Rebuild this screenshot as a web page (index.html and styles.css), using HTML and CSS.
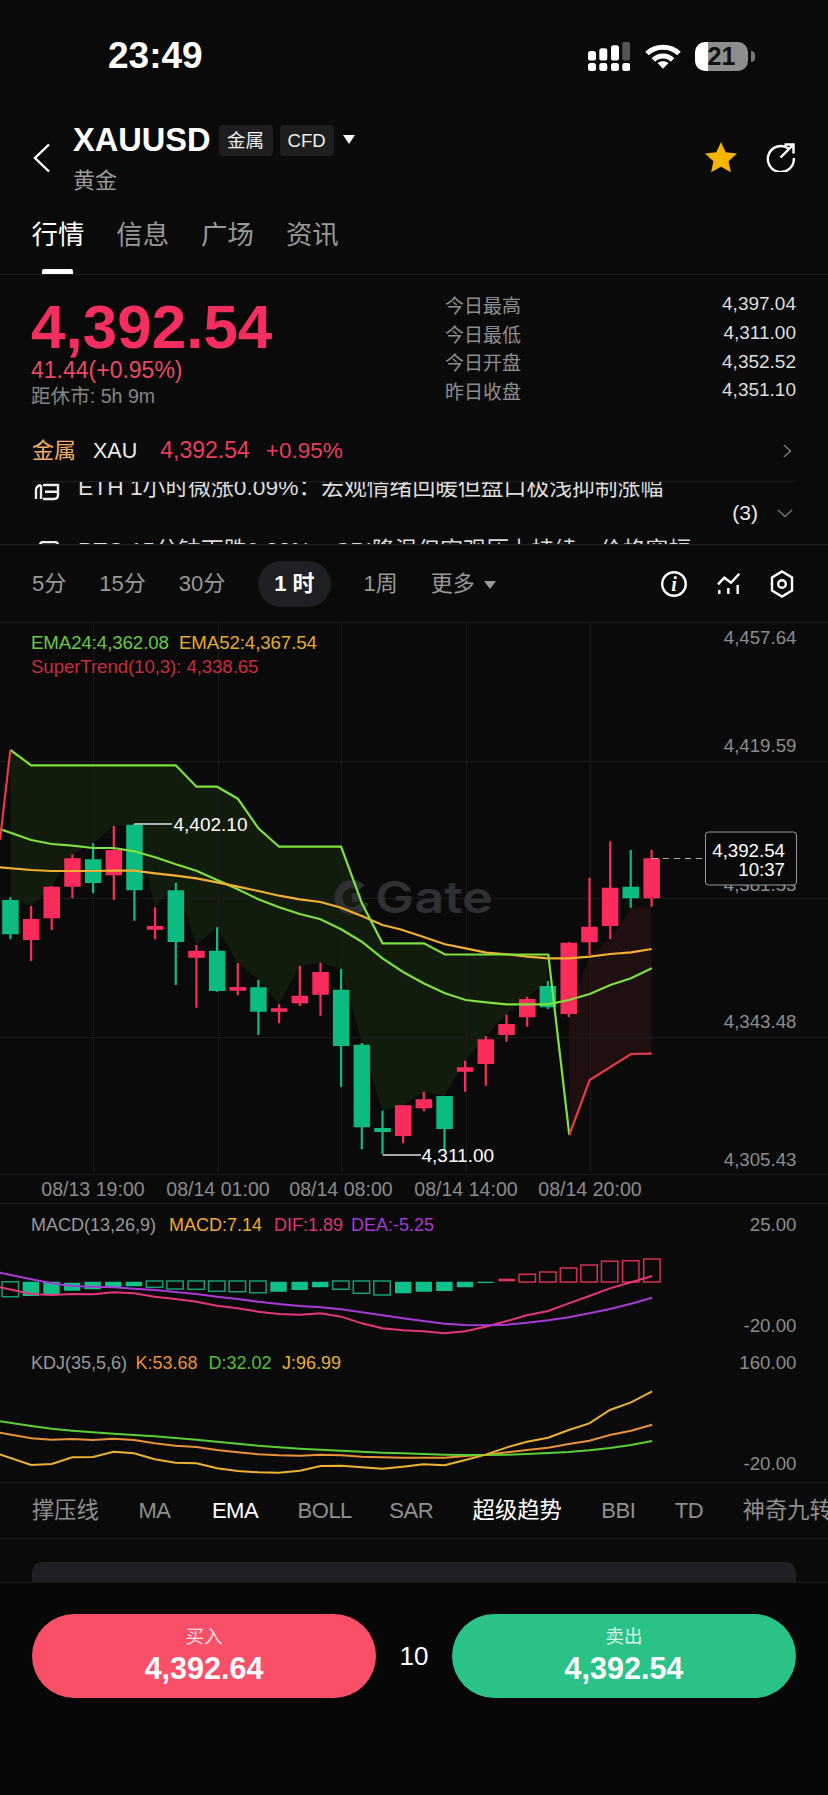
FILE: index.html
```html
<!DOCTYPE html>
<html lang="zh-CN">
<head>
<meta charset="utf-8">
<title>XAUUSD</title>
<link rel="stylesheet" href="styles.css">
</head>
<body>
<main class="app">
  <header class="status">
    <span class="clock">23:49</span>
    <div class="status-icons">
      <svg class="signal" viewBox="0 0 42 29" width="42" height="29">
        <path class="sig-on" d="M2.500 21h3a2.500 2.500 0 0 1 2.500 2.500v3a2.500 2.500 0 0 1-2.500 2.500h-3a2.500 2.500 0 0 1-2.500-2.500v-3a2.500 2.500 0 0 1 2.500-2.500zM13.800 21h3a2.500 2.500 0 0 1 2.500 2.500v3a2.500 2.500 0 0 1-2.500 2.500h-3a2.500 2.500 0 0 1-2.500-2.500v-3a2.500 2.500 0 0 1 2.500-2.500zM25.500 21h3a2.500 2.500 0 0 1 2.500 2.500v3a2.500 2.500 0 0 1-2.500 2.500h-3a2.500 2.500 0 0 1-2.500-2.500v-3a2.500 2.500 0 0 1 2.500-2.500zM36.800 21h3a2.500 2.500 0 0 1 2.500 2.500v3a2.500 2.500 0 0 1-2.500 2.500h-3a2.500 2.500 0 0 1-2.500-2.500v-3a2.500 2.500 0 0 1 2.500-2.500z"/>
        <path class="sig-on" d="M2.500 9h3a2.500 2.500 0 0 1 2.500 2.500v5a2 2 0 0 1-2 2h-4a2 2 0 0 1-2-2v-5a2.500 2.500 0 0 1 2.500-2.500zM13.800 6.300h3a2.500 2.500 0 0 1 2.500 2.500v7.700a2 2 0 0 1-2 2h-4a2 2 0 0 1-2-2v-7.700a2.500 2.500 0 0 1 2.500-2.500zM25.500 3.300h3a2.500 2.500 0 0 1 2.500 2.500v10.700a2 2 0 0 1-2 2h-4a2 2 0 0 1-2-2v-10.700a2.500 2.500 0 0 1 2.500-2.500z"/>
        <path class="sig-off" d="M36.300 0h4a1.800 1.800 0 0 1 1.700 1.800v14.700a2 2 0 0 1-2 2h-3.700a2 2 0 0 1-2-2v-14.700a1.800 1.800 0 0 1 2-1.800z"/>
      </svg>
      <svg class="wifi" viewBox="0 0 38 28" width="38" height="28">
        <path class="wifi-arc" d="M3 11.500C11.500 3 26.500 3 35 11.500"/>
        <path class="wifi-arc" d="M9.500 18C14.500 12.500 23.500 12.500 28.500 18"/>
        <path class="wifi-dot" d="M13.500 21C16.500 18.800 21.500 18.800 24.500 21L19 26.800z"/>
      </svg>
      <div class="battery"><span>21</span></div>
    </div>
  </header>

  <section class="title-bar">
    <svg class="back" viewBox="0 0 18 30" width="18" height="30"><path class="ico-line" d="M16 1.500L2 15l14 13.500"/></svg>
    <div class="title-main">
      <div class="title-row">
        <h1 class="symbol">XAUUSD</h1>
        <span class="tag">金属</span>
        <span class="tag tag-cfd">CFD</span>
        <span class="caret"></span>
      </div>
      <div class="subname">黄金</div>
    </div>
    <div class="title-actions">
      <svg viewBox="0 0 34 32" width="34" height="32"><path class="star" d="M17 1l4.700 10.300 11.300 1.300-8.400 7.600 2.300 11.100L17 25.700 7.100 31.300l2.300-11.100L1 12.600l11.300-1.300z"/></svg>
      <svg viewBox="0 0 30 30" width="30" height="30"><path class="ico-line" d="M22.500 6.500A13 13 0 1 0 27.800 16M14.500 15.500L27.500 2.500M18.500 2.500h9v9"/></svg>
    </div>
  </section>

  <nav class="tabs">
    <a class="tab tab-on">行情</a>
    <a class="tab">信息</a>
    <a class="tab">广场</a>
    <a class="tab">资讯</a>
  </nav>

  <section class="quote">
    <div class="quote-left">
      <div class="last">4,392.54</div>
      <div class="change">41.44(+0.95%)</div>
      <div class="close-in">距休市: 5h 9m</div>
    </div>
    <dl class="stats">
      <div class="stat"><dt>今日最高</dt><dd>4,397.04</dd></div>
      <div class="stat"><dt>今日最低</dt><dd>4,311.00</dd></div>
      <div class="stat"><dt>今日开盘</dt><dd>4,352.52</dd></div>
      <div class="stat"><dt>昨日收盘</dt><dd>4,351.10</dd></div>
    </dl>
  </section>

  <section class="category">
    <span class="cat-name">金属</span>
    <span class="cat-code">XAU</span>
    <span class="cat-price">4,392.54</span>
    <span class="cat-pct">+0.95%</span>
    <svg class="cat-arrow" viewBox="0 0 9 14" width="9" height="14"><path class="ico-dim" d="M1 1l6.500 6L1 13"/></svg>
  </section>

  <section class="news">
    <div class="news-list">
      <div class="news-item">
        <svg viewBox="0 0 26 24" width="26" height="24"><path class="ico-news" d="M7 7Q2 8 2 12V21M7 7V21M9 7H24V17Q24 21 20 21H9M11 13.700H23"/></svg>
        <span>ETH 1小时微涨0.09%：宏观情绪回暖但盘口极浅抑制涨幅</span>
      </div>
      <div class="news-item">
        <svg viewBox="0 0 26 24" width="26" height="24"><rect class="ico-news" x="6" y="1" width="18" height="20" rx="3"/></svg>
        <span>BTC 15分钟下跌0.38%，CPI降温但宏观压力持续，价格窄幅</span>
      </div>
    </div>
    <div class="news-count">
      <span>(3)</span>
      <svg viewBox="0 0 16 9" width="16" height="9"><path class="ico-dim" d="M1 1l7 6.500L15 1"/></svg>
    </div>
  </section>

  <section class="periods">
    <span class="period">5分</span>
    <span class="period">15分</span>
    <span class="period">30分</span>
    <span class="period period-on">1 时</span>
    <span class="period">1周</span>
    <span class="period">更多<i class="caret caret-small"></i></span>
    <div class="period-tools">
      <svg viewBox="0 0 26 26" width="26" height="26"><circle class="ico-thin" cx="13" cy="13" r="11.800"/><text class="info-i" x="13" y="19.500">i</text></svg>
      <svg viewBox="0 0 24 24" width="24" height="24"><path class="ico-thin" d="M1 12.300L7.300 5.700L14 10.700L22.300 1.700M2.300 18V22M11.300 16V22M20.700 13V22"/></svg>
      <svg viewBox="0 0 24 28" width="24" height="28"><path class="ico-thin" d="M12 1.500L22 7.500v13L12 26.500 2 20.500v-13z"/><circle class="ico-thin" cx="12" cy="14" r="3.800"/></svg>
    </div>
  </section>

  <section class="chart">
    <svg viewBox="0 623 828 580" width="828" height="580">
      <path class="fill-up" d="M10.400 750L31.100 765.300H175.800L196.400 786.700H217.100L237.800 798.700L258.400 828.300L279.100 846.700H341.100L361.800 903L382.500 943.300H424L444.500 954.300H547.800V981L527.200 996.700L506.500 1014.700L485.800 1036L465.100 1060.700L444.500 1096L423.800 1091.700L403.100 1105L382.500 1110.700L361.800 1043L341.100 969L320.500 962.700L299.800 965.700L279.100 1004.300L258.400 980L237.800 963.300L217.100 927.300L196.400 945L175.800 882.700L155.100 907.300L134.400 824L113.800 826L93.100 843.300L72.400 854.300L51.700 886L31.100 906L10.400 897.300z"/>
      <path class="fill-down" d="M569 1017L589.700 955L610.300 939L631 907.700L651.700 906.700V1053.700L631 1054L589.700 1080L569.300 1135z"/>
      <path class="grid" d="M0 761.500H828M0 898.500H828M0 1037.500H828M0 1174.500H828M93.500 623V1174M218.500 623V1174M341.500 623V1174M466.500 623V1174M590.500 623V1174"/>
      <path class="wm-logo" d="M361.500 888A13.500 13.500 0 1 0 364.700 902"/>
      <rect class="wm-square" x="352" y="893" width="9" height="9"/>
      <text class="watermark" x="375" y="913" textLength="118" lengthAdjust="spacingAndGlyphs">Gate</text>

      <path class="wick-up" d="M10.400 897.300V939.300M93.100 843.300V893.300M134.400 824V920.700M175.800 882.700V985M217.100 927.300V991.700M258.400 980V1035M341.100 969V1087M361.800 1043V1149.300M382.500 1110.700V1154M444.500 1096V1151M547.800 981V1009M630.700 850V907.700"/>
      <path class="wick-down" d="M31.100 906V961M51.700 886V930M72.400 854.300V898.300M113.800 826V900M155.100 907.300V939.300M196.400 945V1007.700M237.800 963.300V995.300M279.100 1004.300V1023.300M299.800 965.700V1006M320.500 962.700V1015.700M403.100 1105V1143.300M423.800 1091.700V1111.300M465.100 1060.700V1091.700M485.800 1036V1085.700M506.500 1014.700V1041.700M527.200 996.700V1026.700M568.800 942V1017M589.500 877.700V955M610.200 841.300V939M651.600 850V906.700"/>
      <path class="body-up" d="M2.200 900h16.500V934.300h-16.500zM84.900 859.300h16.500V883h-16.500zM126.200 824.700h16.500V890.300h-16.500zM167.600 890.300h16.500V942h-16.500zM208.900 950.700h16.500V991h-16.500zM250.200 987.300h16.500V1011.700h-16.500zM332.900 989.700h16.500V1046h-16.500zM353.600 1044.700h16.500V1127.300h-16.500zM374.300 1128h16.500V1132h-16.500zM436.300 1096h16.500V1129h-16.500zM539.600 986h16.500V1007.300h-16.500zM622.500 886.700h16.500V898.300h-16.500z"/>
      <path class="body-down" d="M22.900 919h16.500V940h-16.500zM43.500 886.700h16.500V918.300h-16.500zM64.200 858.300h16.500V886.700h-16.500zM105.600 850h16.500V875.300h-16.500zM146.900 926h16.500V929.700h-16.500zM188.200 950.700h16.500V957.700h-16.500zM229.600 987h16.500V990.700h-16.500zM270.900 1008.300h16.500V1011.700h-16.500zM291.600 995.700h16.500V1003.300h-16.500zM312.300 972h16.500V994.700h-16.500zM394.900 1105.300h16.500V1136h-16.500zM415.600 1099.300h16.500V1108.300h-16.500zM456.900 1067.300h16.500V1071.700h-16.500zM477.600 1039.300h16.500V1064h-16.500zM498.300 1024h16.500V1035h-16.500zM519 999h16.500V1017.300h-16.500zM560.500 942.700h16.500V1014h-16.500zM581.200 926.700h16.500V942.300h-16.500zM601.900 887.700h16.500V926h-16.500zM643.400 858.300h16.500V898.300h-16.500z"/>

      <path class="line-ema24" d="M0 829L31.100 840L51.700 844L72.400 845.700L93.100 848L113.800 848L134.400 851.300L155.100 857.300L175.800 864.300L196.400 870.700L217.100 880L237.800 889.300L258.400 899.300L279.100 907.300L299.800 914L320.500 919.300L341.100 929.300L361.800 941.700L382.500 958.300L403.100 972L424 983.500L445 993.300L465.700 1000L486.300 1002.300L507 1004.300L527.700 1004.300L548.300 1004.300L569 1000L589.700 994L610.300 985L631 978.300L651.700 968.300"/>
      <path class="line-ema52" d="M0 867.300L31.100 870L51.700 871L72.400 871L93.100 871L113.800 870.700L134.400 870.700L155.100 873.300L175.800 875.700L196.400 878.300L217.100 882.300L237.800 886.700L258.400 891L279.100 895.700L299.800 899.300L320.500 902L341.100 907.700L361.800 916L382.500 925L400 929.300L420.700 936L445 944.300L465.700 948.300L486.300 952.700L507 954.300L527.700 956.700L548.300 958.300L569 958.300L589.700 956.700L610.300 954L631 952.300L651.700 949"/>
      <path class="line-st-up" d="M10.400 750L31.100 765.300H175.800L196.400 786.700H217.100L237.800 798.700L258.400 828.300L279.100 846.700H341.100L361.800 903L382.500 943.300H424L445 954.500H548.300L569.300 1135"/>
      <path class="line-st-down" d="M0 840L10.400 750M569.300 1135L589.700 1080L631 1054L651.700 1053.700"/>

      <text class="leg leg-ema24" x="31" y="648.500">EMA24:4,362.08</text>
      <text class="leg leg-ema52" x="179" y="648.500">EMA52:4,367.54</text>
      <text class="leg leg-st" x="31" y="672.500">SuperTrend(10,3): 4,338.65</text>

      <text class="ax" x="796.500" y="644">4,457.64</text>
      <text class="ax" x="796.500" y="752">4,419.59</text>
      <text class="ax" x="796.500" y="891">4,381.53</text>
      <text class="ax" x="796.500" y="1027.500">4,343.48</text>
      <text class="ax" x="796.500" y="1166">4,305.43</text>

      <path class="hi-lo" d="M134.400 824H172M382.500 1155H421"/>
      <text class="mark" x="173.500" y="831">4,402.10</text>
      <text class="mark" x="421.500" y="1162">4,311.00</text>

      <path class="last-dash" d="M652 858.500H705"/>
      <rect class="last-box" x="705.500" y="832" width="91" height="53" rx="3"/>
      <text class="box-text" x="785" y="856.500">4,392.54</text>
      <text class="box-text" x="785" y="875.500">10:37</text>

      <text class="t" x="93" y="1195.500">08/13 19:00</text>
      <text class="t" x="218" y="1195.500">08/14 01:00</text>
      <text class="t" x="341" y="1195.500">08/14 08:00</text>
      <text class="t" x="466" y="1195.500">08/14 14:00</text>
      <text class="t" x="590" y="1195.500">08/14 20:00</text>
    </svg>
  </section>

  <section class="subcharts">
    <svg viewBox="0 1203 828 279" width="828" height="279">
      <path class="grid" d="M0 1203.500H828"/>
      <g transform="translate(0 1190) scale(.52806 .33333)">
        <path class="hist-up" d="M43 275h31v43h-31zM82 275h31v37h-31zM121 278h31v24h-31zM160 275h31v23h-31zM199 275h31v17h-31zM238 275h31v14h-31zM512 275h31v30h-31zM552 275h31v25h-31zM591 275h31v17h-31zM748 275h31v35h-31zM787 275h31v30h-31zM826 275h31v28h-31zM865 275h31v17h-31zM904 275h31v4h-31z"/>
        <path class="hist-up-o" d="M4 275h31v45h-31zM277 273h31v19h-31zM316 273h31v24h-31zM356 273h31v25h-31zM395 273h31v31h-31zM434 273h31v32h-31zM473 273h31v35h-31zM630 273h31v25h-31zM669 273h31v37h-31zM708 273h31v42h-31z"/>
        <path class="hist-down" d="M944 266h31v8h-31z"/>
        <path class="hist-down-o" d="M983 253h31v23h-31zM1022 246h31v30h-31zM1061 234h31v42h-31zM1100 225h31v51h-31zM1139 214h31v62h-31zM1179 212h31v64h-31zM1219 207h31v69h-31z"/>
        <path class="ln ln-dif" d="M0 292L59 312L98 315L137 312L176 313L215 307L254 310L293 320L332 327L372 335L411 347L450 355L489 365L528 372L568 374L607 370L646 380L685 400L724 415L763 421L802 424L842 430L881 424L920 410L960 393L998 376L1038 363L1077 340L1116 318L1155 295L1195 277L1235 258"/>
        <path class="ln ln-dea" d="M0 248L59 268L98 280L137 288L176 290L215 292L254 296L293 300L332 306L372 312L411 320L450 327L489 335L528 342L568 348L607 352L646 358L685 367L724 376L763 385L802 393L842 401L881 405L920 406L960 404L998 398L1038 391L1077 382L1116 370L1155 357L1195 341L1235 323"/>
        <path class="ln ln-k" d="M0 728L59 745L98 749L137 747L176 750L215 746L254 750L293 760L332 767L372 771L411 780L450 787L489 793L528 796L568 797L607 794L646 796L685 800L724 802L763 803L802 803L842 803L881 798L920 794L960 787L998 780L1038 773L1077 762L1116 752L1155 735L1195 722L1235 704"/>
        <path class="ln ln-d" d="M0 694L59 708L98 716L137 722L176 727L215 731L254 735L293 739L332 744L372 749L411 755L450 761L489 767L528 772L568 776L607 779L646 782L685 785L724 788L763 790L802 792L842 794L881 795L920 795L960 794L998 792L1038 789L1077 786L1116 781L1155 774L1195 765L1235 753"/>
        <path class="ln ln-j" d="M0 793L59 825L98 822L137 802L176 801L215 785L254 790L293 808L332 818L372 820L411 835L450 843L489 847L528 848L568 842L607 828L646 827L685 832L724 836L763 830L802 823L842 826L881 810L920 794L960 772L998 755L1038 743L1077 720L1116 700L1155 660L1195 637L1235 604"/>
      </g>
      <text class="sub-leg c-gray" x="31" y="1231">MACD(13,26,9)</text>
      <text class="sub-leg c-macd" x="169" y="1231">MACD:7.14</text>
      <text class="sub-leg c-dif" x="274" y="1231">DIF:1.89</text>
      <text class="sub-leg c-dea" x="351" y="1231">DEA:-5.25</text>
      <text class="ax" x="796.500" y="1230.500">25.00</text>
      <text class="ax" x="796.500" y="1332">-20.00</text>
      <text class="sub-leg c-gray" x="31" y="1369">KDJ(35,5,6)</text>
      <text class="sub-leg c-k" x="135.500" y="1369">K:53.68</text>
      <text class="sub-leg c-d" x="208.500" y="1369">D:32.02</text>
      <text class="sub-leg c-j" x="282" y="1369">J:96.99</text>
      <text class="ax" x="796.500" y="1368.500">160.00</text>
      <text class="ax" x="796.500" y="1470">-20.00</text>
    </svg>
  </section>

  <nav class="indicators">
    <span class="ind-cjk">撑压线</span>
    <span>MA</span>
    <span class="ind-on ind-ema">EMA</span>
    <span class="ind-boll">BOLL</span>
    <span>SAR</span>
    <span class="ind-on ind-cjk">超级趋势</span>
    <span>BBI</span>
    <span>TD</span>
    <span class="ind-cjk">神奇九转</span>
  </nav>

  <section class="peek"><div class="peek-card"></div></section>

  <footer class="trade">
    <button class="btn btn-buy"><span class="btn-label">买入</span><span class="btn-price">4,392.64</span></button>
    <span class="spread">10</span>
    <button class="btn btn-sell"><span class="btn-label">卖出</span><span class="btn-price">4,392.54</span></button>
  </footer>
</main>
</body>
</html>
```

FILE: styles.css
```css
* { box-sizing: border-box; margin: 0; padding: 0; }
html, body { background: #0a0a0a; }
body {
  width: 828px;
  height: 1795px;
  overflow: hidden;
  font-family: "Liberation Sans", "Noto Sans CJK SC", sans-serif;
  color: #fff;
}
.app { width: 828px; height: 1795px; display: flex; flex-direction: column; overflow: hidden; }
svg { display: block; }

/* status bar */
.status { height: 112px; flex: none; display: flex; align-items: center; justify-content: space-between; padding: 0 80px 0 108px; }
.clock { font-size: 37px; font-weight: 700; }
.status-icons { display: flex; align-items: center; gap: 13.500px; }
.sig-on { fill: #fff; }
.sig-off { fill: #555; }
.wifi-arc { fill: none; stroke: #fff; stroke-width: 5; }
.wifi-dot { fill: #fff; }
.battery { position: relative; width: 53px; height: 29px; border-radius: 10px; background: linear-gradient(to right, #fff 24%, #8e8e8e 24%); display: flex; align-items: center; justify-content: center; }
.battery span { color: #111; font-size: 25px; font-weight: 700; line-height: 1; }
.battery::after { content: ""; position: absolute; left: 56px; top: 9px; width: 4px; height: 11px; border-radius: 0 4px 4px 0; background: #777; }

/* title */
.title-bar { height: 88px; flex: none; display: flex; padding: 11px 32px 0 33px; position: relative; }
.back { margin: 20px 22px 0 0; }
.ico-line { fill: none; stroke: #fff; stroke-width: 2.400; }
.title-main { display: flex; flex-direction: column; }
.title-row { display: flex; align-items: center; height: 34px; }
.symbol { font-size: 32.600px; line-height: 34px; font-weight: 700; margin-right: 8px; }
.tag { height: 31px; width: 54px; background: #1e1e1e; border-radius: 4px; font-size: 18.500px; line-height: 31px; text-align: center; color: #eee; }
.tag-cfd { margin-left: 7px; }
.caret { display: block; width: 0; height: 0; margin: 0 0 1px 9px; border-left: 6.500px solid transparent; border-right: 6.500px solid transparent; border-top: 9px solid #fff; }
.subname { margin-top: 8px; font-size: 22px; line-height: 32px; color: #999; }
.title-actions { margin-left: auto; margin-top: 18px; height: 32px; display: flex; gap: 28px; align-items: center; }
.star { fill: #f7b500; }

/* tabs */
.tabs { height: 75px; flex: none; display: flex; gap: 32px; padding: 0 31.500px; border-bottom: 1px solid #1c1c1c; }
.tab { position: relative; font-size: 26.400px; line-height: 70px; color: #999; width: 52.800px; }
.tab-on { color: #fff; }
.tab-on::after { content: ""; position: absolute; left: 10.500px; bottom: 0; width: 31px; height: 5px; border-radius: 2px 2px 0 0; background: #fff; }

/* quote */
.quote { height: 145px; flex: none; display: flex; justify-content: space-between; padding: 0 32px; }
.quote-left { margin-left: -1px; }
.last { margin-top: 22px; font-size: 62px; line-height: 60px; font-weight: 700; color: #f42f5f; }
.change { font-size: 23px; line-height: 26px; color: #e84a66; }
.close-in { font-size: 19.600px; line-height: 27px; color: #858585; }
.stats { width: 351px; padding-top: 15px; }
.stat { height: 28.700px; display: flex; justify-content: space-between; align-items: center; font-size: 19px; }
.stat dt { color: #8f8f8f; }
.stat dd { color: #dedede; }

/* category row */
.category { height: 62px; flex: none; margin: 0 32px; padding-top: 14px; display: flex; align-items: baseline; font-size: 23px; line-height: 32px; border-bottom: 1px solid #1f1f1f; }
.cat-name { font-size: 22px; color: #f2ab70; }
.cat-code { margin-left: 17px; font-size: 21.500px; color: #eee; }
.cat-price { margin-left: 23px; color: #e83d5e; }
.cat-pct { margin-left: 16px; font-size: 22.500px; color: #e83d5e; }
.cat-arrow { margin: 0 4px 14px auto; align-self: center; }
.ico-dim { fill: none; stroke: #777; stroke-width: 1.500; }

/* news ticker */
.news { position: relative; height: 62px; flex: none; overflow: hidden; padding: 0 32px; }
.news-list { margin-top: -11px; }
.news-item { height: 63px; display: flex; gap: 18px; font-size: 22.800px; line-height: 32px; color: #dcdcdc; white-space: nowrap; }
.news-item svg { margin: 7px 0 0 2px; flex: none; }
.ico-news { fill: none; stroke: #eee; stroke-width: 2.400; }
.news-count { position: absolute; right: 35px; top: 15px; display: flex; align-items: center; gap: 19px; font-size: 21px; line-height: 32px; color: #e8e8e8; }

/* period bar */
.periods { height: 79px; flex: none; display: flex; align-items: center; gap: 33px; padding: 0 32px; border-top: 1px solid #202020; border-bottom: 1px solid #1c1c1c; }
.period { font-size: 22px; line-height: 46px; color: #999; display: flex; align-items: center; }
.period-on { background: #1e2023; color: #fff; font-weight: 700; border-radius: 23px; padding: 0 16px; }
.caret-small { margin: 3px 0 0 9px; border-left-width: 6px; border-right-width: 6px; border-top: 8px solid #999; }
.period-tools { margin-left: auto; display: flex; align-items: center; gap: 29.500px; margin-right: 2px; }
.ico-thin { fill: none; stroke: #fff; stroke-width: 2.400; }
.info-i { font-family: "Liberation Serif", serif; font-style: italic; font-weight: 700; font-size: 20px; fill: #fff; text-anchor: middle; }

/* main chart */
.chart { height: 580px; flex: none; }
.grid { fill: none; stroke: #1b1b1b; stroke-width: 1; }
.fill-up { fill: #121c0c; }
.fill-down { fill: #1f0f10; }
.watermark { font-family: Inter, "Liberation Sans", sans-serif; font-weight: 600; font-size: 44px; fill: #2e3033; }
.wm-logo { fill: none; stroke: #2e3033; stroke-width: 8; }
.wm-square { fill: #2e3033; }
.wick-up { fill: none; stroke: #0fbb80; stroke-width: 2.200; }
.wick-down { fill: none; stroke: #f92e5d; stroke-width: 2.200; }
.body-up { fill: #0cbb80; }
.body-down { fill: #fb2c5c; }
.line-ema24, .line-st-up { fill: none; stroke: #7fe03e; stroke-width: 2.200; }
.line-ema52 { fill: none; stroke: #f2b032; stroke-width: 2.200; }
.line-st-down { fill: none; stroke: #e83a44; stroke-width: 2.200; }
.leg { font-size: 18.700px; letter-spacing: -.1px; }
.leg-ema24 { fill: #6bc845; }
.leg-ema52 { fill: #e3ab2e; }
.leg-st { fill: #c72b3e; }
.ax { font-size: 18.700px; fill: #8c8c8c; text-anchor: end; }
.hi-lo { fill: none; stroke: #ddd; stroke-width: 1.300; }
.mark { font-size: 19px; fill: #fff; }
.last-dash { fill: none; stroke: #aaa; stroke-width: 1; stroke-dasharray: 6 5; }
.last-box { fill: #0a0a0a; stroke: #999; stroke-width: 1; }
.box-text { font-size: 18.700px; fill: #fff; text-anchor: end; }
.t { font-size: 19.600px; fill: #8c8c8c; text-anchor: middle; }

/* sub charts */
.subcharts { height: 279px; flex: none; }
.hist-up { fill: #10c08a; }
.hist-up-o, .hist-down-o { fill: #0a0a0a; stroke-width: 1.500; vector-effect: non-scaling-stroke; }
.hist-up-o { stroke: #149d75; }
.hist-down { fill: #e8305f; }
.hist-down-o { stroke: #d92c58; fill: none; }
.ln { fill: none; stroke-width: 2; vector-effect: non-scaling-stroke; }
.ln-dif { stroke: #e5357c; }
.ln-dea { stroke: #a93ad6; }
.ln-k { stroke: #e8923a; }
.ln-d { stroke: #5bcf36; }
.ln-j { stroke: #ecb232; }
.sub-leg { font-size: 18px; }
.c-gray { fill: #999; }
.c-macd { fill: #efab30; }
.c-dif { fill: #df3472; }
.c-dea { fill: #a63bd0; }
.c-k { fill: #e8913a; }
.c-d { fill: #52c035; }
.c-j { fill: #e8b030; }

/* indicator tabs */
.indicators { height: 57px; flex: none; display: flex; align-items: baseline; gap: 39.500px; padding: 12px 32px 0; font-size: 22px; line-height: 32px; letter-spacing: -.5px; color: #8f8f8f; white-space: nowrap; border-top: 1px solid #1b1b1b; border-bottom: 1px solid #1b1b1b; overflow: hidden; }
.ind-cjk { font-size: 22.300px; letter-spacing: 0; }
.ind-on { color: #fff; }
.ind-ema { margin-left: 2px; }
.ind-boll { margin-right: -2px; }

/* peek of the card below */
.peek { height: 43px; flex: none; padding: 23px 32px 0; overflow: hidden; }
.peek-card { height: 40px; border-radius: 10px; background: #1e2024; }

/* trade bar */
.trade { flex: 1; display: flex; align-items: flex-start; justify-content: space-between; padding: 31px 32px 0; background: #070707; border-top: 1px solid #1b1b1b; }
.btn { width: 344px; height: 84px; border: 0; border-radius: 42px; display: flex; flex-direction: column; align-items: center; color: #fff; font-family: inherit; padding-top: 11px; }
.btn-buy { background: #f94f68; }
.btn-sell { background: #2ac287; }
.btn-label { font-size: 18.500px; line-height: 23px; color: rgba(255, 255, 255, .82); }
.btn-price { font-size: 30.500px; line-height: 40px; font-weight: 700; }
.spread { font-size: 26px; line-height: 84px; color: #fff; }
```
